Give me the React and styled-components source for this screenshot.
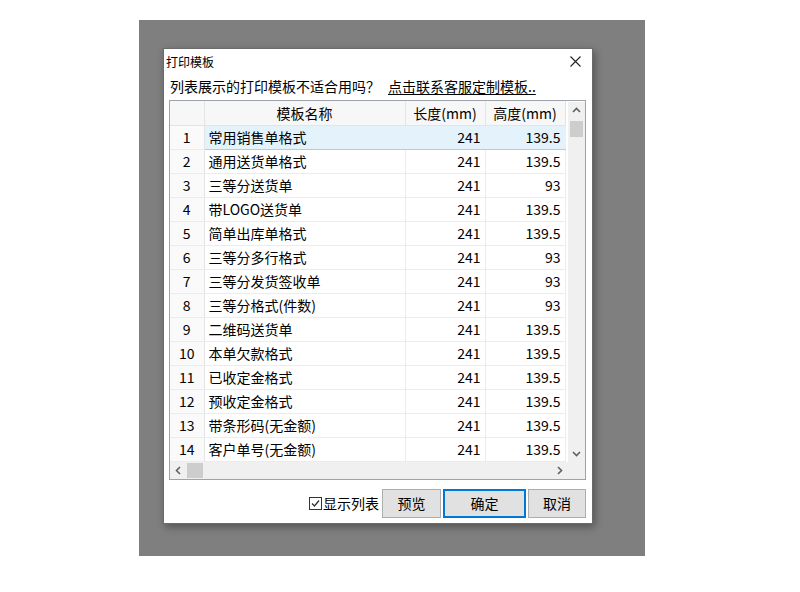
import React from 'react';
import styled, { createGlobalStyle } from 'styled-components';

const templates = [
    { name: '常用销售单格式', w: '241', h: '139.5' },
    { name: '通用送货单格式', w: '241', h: '139.5' },
    { name: '三等分送货单', w: '241', h: '93' },
    { name: '带LOGO送货单', w: '241', h: '139.5' },
    { name: '简单出库单格式', w: '241', h: '139.5' },
    { name: '三等分多行格式', w: '241', h: '93' },
    { name: '三等分发货签收单', w: '241', h: '93' },
    { name: '三等分格式(件数)', w: '241', h: '93' },
    { name: '二维码送货单', w: '241', h: '139.5' },
    { name: '本单欠款格式', w: '241', h: '139.5' },
    { name: '已收定金格式', w: '241', h: '139.5' },
    { name: '预收定金格式', w: '241', h: '139.5' },
    { name: '带条形码(无金额)', w: '241', h: '139.5' },
    { name: '客户单号(无金额)', w: '241', h: '139.5' },
];

const Arrow = ({ dir }) => {
    const pts = {
        up: '1,6 4.5,2.5 8,6',
        down: '1,3 4.5,6.5 8,3',
        left: '6,1 2.5,4.5 6,8',
        right: '3,1 6.5,4.5 3,8',
    }[dir];
    return (
        <svg width="9" height="9" viewBox="0 0 9 9">
            <polyline points={pts} fill="none" stroke="#606060" strokeWidth="1.6" />
        </svg>
    );
};

const App = () => {
    const [showList, setShowList] = React.useState(true);
    const [selected, setSelected] = React.useState(0);

    return (
        <>
            <GlobalStyle />
            <Backdrop>
                <Dialog>
                    <TitleBar>
                        <Title>打印模板</Title>
                        <CloseBtn>
                            <svg width="11" height="11" viewBox="0 0 11 11">
                                <path d="M0.5 0.5 L10.5 10.5 M10.5 0.5 L0.5 10.5" stroke="#222" strokeWidth="1.1" />
                            </svg>
                        </CloseBtn>
                    </TitleBar>

                    <Prompt>
                        列表展示的打印模板不适合用吗？
                        <Link>点击联系客服定制模板..</Link>
                    </Prompt>

                    <GridBox>
                        <GridMain>
                            <Table>
                                <colgroup>
                                    <col style={{ width: 34 }} />
                                    <col style={{ width: 201 }} />
                                    <col style={{ width: 80 }} />
                                    <col style={{ width: 80 }} />
                                </colgroup>
                                <thead>
                                    <tr>
                                        <HeadCell />
                                        <HeadCell>模板名称</HeadCell>
                                        <HeadCell>长度(mm)</HeadCell>
                                        <HeadCell>高度(mm)</HeadCell>
                                    </tr>
                                </thead>
                                <tbody>
                                    {templates.map((t, i) => (
                                        <Row key={i} onClick={() => setSelected(i)}>
                                            <NumCell>{i + 1}</NumCell>
                                            <Cell active={i === selected}>{t.name}</Cell>
                                            <Cell active={i === selected} right>{t.w}</Cell>
                                            <Cell active={i === selected} right>{t.h}</Cell>
                                        </Row>
                                    ))}
                                </tbody>
                            </Table>
                            <HScroll>
                                <ArrowBtn><Arrow dir="left" /></ArrowBtn>
                                <HThumb />
                                <HTrack />
                                <ArrowBtn><Arrow dir="right" /></ArrowBtn>
                            </HScroll>
                        </GridMain>
                        <VScrollCol>
                            <VScroll>
                                <ArrowBtn tall><Arrow dir="up" /></ArrowBtn>
                                <VThumb />
                                <VTrack />
                                <ArrowBtn tall><Arrow dir="down" /></ArrowBtn>
                            </VScroll>
                            <Corner />
                        </VScrollCol>
                    </GridBox>

                    <Footer>
                        <CheckLabel onClick={() => setShowList(!showList)}>
                            <CheckBox>
                                {showList && (
                                    <svg width="11" height="11" viewBox="0 0 11 11">
                                        <polyline points="2,5.5 4.5,8 9,2.5" fill="none" stroke="#333" strokeWidth="1.3" />
                                    </svg>
                                )}
                            </CheckBox>
                            显示列表
                        </CheckLabel>
                        <Button w={59}>预览</Button>
                        <Button w={83} primary>确定</Button>
                        <Button w={58}>取消</Button>
                    </Footer>
                </Dialog>
            </Backdrop>
        </>
    );
};

const GlobalStyle = createGlobalStyle`
    body {
        margin: 0;
        background: #fff;
        font-family: "Noto Sans CJK SC", "Noto Sans", sans-serif;
    }
`;

const Backdrop = styled.div`
    margin: 20px 0 0 139px;
    width: 506px;
    height: 536px;
    box-sizing: border-box;
    padding: 28px 52px 32px 24px;
    background: #7f7f7f;
`;

const Dialog = styled.div`
    width: 430px;
    height: 476px;
    box-sizing: border-box;
    background: #fff;
    border: 1px solid #6a6a6a;
    box-shadow: 2px 3px 8px rgba(0, 0, 0, 0.35);
    padding: 0 6px 0 5px;
    display: flex;
    flex-direction: column;
`;

const TitleBar = styled.div`
    height: 25px;
    display: flex;
    align-items: center;
    justify-content: space-between;
`;

const Title = styled.div`
    font-size: 12px;
    line-height: 14px;
    color: #000;
    margin-left: -3px;
    padding-top: 1px;
`;

const CloseBtn = styled.div`
    width: 20px;
    height: 20px;
    display: flex;
    align-items: center;
    justify-content: center;
    margin-right: 1px;
`;

const Prompt = styled.div`
    height: 24px;
    display: flex;
    align-items: center;
    font-size: 14px;
    line-height: 16px;
    color: #000;
    margin-bottom: 2px;
    padding-left: 1px;
    white-space: nowrap;
`;

const Link = styled.span`
    margin-left: 8px;
    text-decoration: underline;
    text-underline-offset: 2px;
    cursor: pointer;
`;

const GridBox = styled.div`
    display: flex;
    border: 1px solid #9da3ab;
    width: 417px;
    box-sizing: border-box;
`;

const GridMain = styled.div`
    width: 398px;
    display: flex;
    flex-direction: column;
`;

const Table = styled.table`
    border-collapse: collapse;
    table-layout: fixed;
    width: 395px;
    font-size: 14px;
    color: #000;
`;

const HeadCell = styled.th`
    height: 24px;
    padding: 0;
    font-weight: normal;
    line-height: 16px;
    background: #f7f7f7;
    border-right: 1px solid #e4e4e4;
    border-bottom: 1px solid #e4e4e4;
    box-sizing: border-box;
    text-align: center;
`;

const Row = styled.tr`
    height: 24px;
`;

const NumCell = styled.td`
    height: 24px;
    padding: 0;
    text-align: center;
    line-height: 16px;
    background: #fafafa;
    border-right: 1px solid #e4e4e4;
    border-bottom: 1px solid #ececec;
    box-sizing: border-box;
`;

const Cell = styled.td`
    height: 24px;
    padding: 0 4px;
    line-height: 16px;
    white-space: nowrap;
    overflow: hidden;
    text-align: ${(props) => (props.right ? 'right' : 'left')};
    background: ${(props) => (props.active ? '#e3f2fb' : '#fff')};
    border-right: 1px solid ${(props) => (props.active ? '#e3f2fb' : '#ececec')};
    border-bottom: 1px solid ${(props) => (props.active ? '#9fd3f0' : '#ececec')};
    border-top: ${(props) => (props.active ? '1px solid #9fd3f0' : 'none')};
    box-sizing: border-box;
`;

const HScroll = styled.div`
    height: 17px;
    margin-top: auto;
    display: flex;
    background: #f0f0f0;
`;

const ArrowBtn = styled.div`
    width: 17px;
    height: 17px;
    flex: none;
    display: flex;
    align-items: center;
    justify-content: center;
`;

const HThumb = styled.div`
    width: 16px;
    height: 15px;
    margin-top: 1px;
    background: #cdcdcd;
`;

const HTrack = styled.div`
    flex: 1;
`;

const VScrollCol = styled.div`
    width: 17px;
    display: flex;
    flex-direction: column;
`;

const VScroll = styled.div`
    flex: 1;
    display: flex;
    flex-direction: column;
    background: #f0f0f0;
    margin-top: 1px;
`;

const VThumb = styled.div`
    height: 16px;
    width: 13px;
    margin: 2px 0 0 2px;
    background: #cdcdcd;
`;

const VTrack = styled.div`
    flex: 1;
`;

const Corner = styled.div`
    height: 17px;
    background: #f0f0f0;
`;

const Footer = styled.div`
    margin-top: 9px;
    display: flex;
    align-items: center;
    justify-content: flex-end;
    gap: 2px;
    padding-right: 0;
`;

const CheckLabel = styled.label`
    display: flex;
    align-items: center;
    font-size: 14px;
    line-height: 16px;
    margin-right: 1px;
    cursor: pointer;
`;

const CheckBox = styled.span`
    width: 13px;
    height: 13px;
    box-sizing: border-box;
    border: 1px solid #333;
    background: #fff;
    display: flex;
    align-items: center;
    justify-content: center;
    margin-right: 1px;
`;

const Button = styled.button`
    width: ${(props) => props.w}px;
    height: 29px;
    padding: 0;
    font-family: inherit;
    font-size: 14px;
    color: #000;
    background: #e1e1e1;
    border: ${(props) => (props.primary ? '2px solid #0078d7' : '1px solid #adadad')};
    box-sizing: border-box;
`;

export default App;
